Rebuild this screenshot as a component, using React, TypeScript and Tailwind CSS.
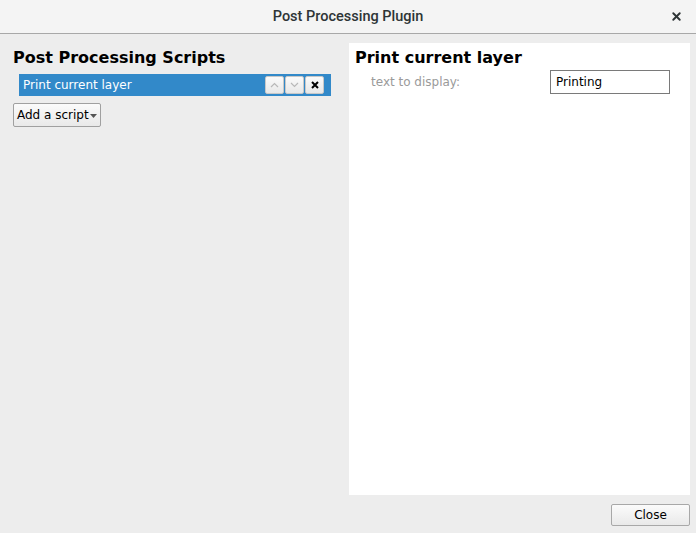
import { X } from 'lucide-react';

function SmallButton({ children, dim }: { children: React.ReactNode; dim?: boolean }) {
  return (
    <div
      className={`w-[19px] h-[18px] flex items-center justify-center rounded-[2px] border border-[#c8c8c8] bg-gradient-to-b from-[#fafafa] to-[#e8e8e8] ${
        dim ? 'text-[#b8b8b8]' : 'text-black'
      }`}
    >
      {children}
    </div>
  );
}

export default function App() {
  return (
    <div className="w-[696px] h-[533px] flex flex-col bg-[#ededed] text-black" style={{ fontFamily: '"DejaVu Sans", sans-serif' }}>
      <div className="h-[34px] flex-shrink-0 relative flex items-center justify-center bg-[#f4f4f4] border-b border-[#a8a8a8]">
        <span className="text-[14.5px] text-[#2e3436] font-medium" style={{ fontFamily: 'Roboto, sans-serif' }}>
          Post Processing Plugin
        </span>
        <X className="absolute right-[13px] top-[10px] w-[13px] h-[13px] text-[#2e3436]" strokeWidth={3.5} />
      </div>

      <div className="flex-1 flex pt-[9px] pl-[13px] pr-[6px]">
        <div className="w-[318px] flex flex-col">
          <h1 className="text-[16px] font-bold leading-[20px] mt-[5px]">Post Processing Scripts</h1>
          <div className="mt-[6px] ml-[6px] h-[22px] bg-[#3289c9] flex items-center pl-[4px] pr-[7px]">
            <span className="text-[12px] text-white flex-1">Print current layer</span>
            <div className="flex gap-[1px]">
              <SmallButton dim>
                <svg width="9" height="6" viewBox="0 0 9 6"><path d="M1 5 L4.5 1.5 L8 5" fill="none" stroke="currentColor" strokeWidth="1.2" /></svg>
              </SmallButton>
              <SmallButton dim>
                <svg width="9" height="6" viewBox="0 0 9 6"><path d="M1 1 L4.5 4.5 L8 1" fill="none" stroke="currentColor" strokeWidth="1.2" /></svg>
              </SmallButton>
              <SmallButton>
                <svg width="8" height="8" viewBox="0 0 8 8"><path d="M1 1 L7 7 M7 1 L1 7" fill="none" stroke="currentColor" strokeWidth="2" /></svg>
              </SmallButton>
            </div>
          </div>
          <div className="mt-[7px] w-[88px] h-[24px] flex items-center pl-[3px] rounded-[2px] border border-[#a0a0a0] bg-gradient-to-b from-[#fbfbfb] to-[#e9e9e9]">
            <span className="text-[12px]">Add a script</span>
            <svg width="7" height="4" viewBox="0 0 7 4" className="ml-[1px] mt-[2px]"><path d="M0 0 L7 0 L3.5 4 Z" fill="#555" /></svg>
          </div>
        </div>

        <div className="ml-[18px] flex-1 flex flex-col">
          <div className="h-[452px] bg-white px-[6px] pt-[5px]">
            <h2 className="text-[16px] font-bold leading-[20px]">Print current layer</h2>
            <div className="flex items-center mt-[2px]">
              <span className="ml-[16px] w-[179px] text-[12px] text-[#9a9a9a]">text to display:</span>
              <div className="w-[120px] h-[24px] border border-[#7a7a7a] flex items-center pl-[5px] text-[12px]">Printing</div>
            </div>
          </div>
          <div className="flex justify-end mt-[9px]">
            <div className="w-[79px] h-[22px] rounded-[2px] border border-[#a8a8a8] bg-gradient-to-b from-[#fbfbfb] to-[#e9e9e9] flex items-center justify-center text-[12px]">
              Close
            </div>
          </div>
        </div>
      </div>
    </div>
  );
}
